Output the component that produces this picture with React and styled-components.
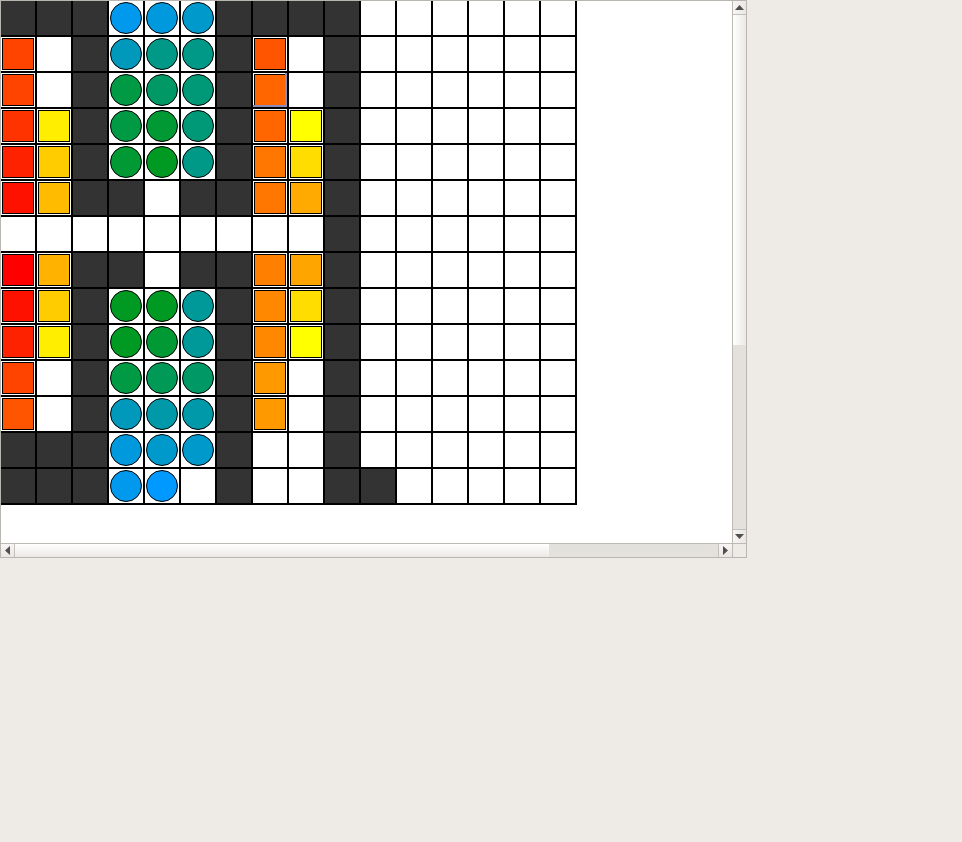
import React from "react";
import styled, { createGlobalStyle, css } from "styled-components";

const Global = createGlobalStyle`
  html, body { margin: 0; padding: 0; background: #eeebe7; }
  body { font-family: "Liberation Sans", Arial, sans-serif; }
`;

const Frame = styled.div`
  width: 747px;
  height: 558px;
  box-sizing: border-box;
  border: 1px solid #b9b5b0;
  display: grid;
  grid-template-columns: 731px 14px;
  grid-template-rows: 542px 14px;
  background: #ffffff;
`;

const Viewport = styled.div`
  background: #ffffff;
  overflow: hidden;
`;

const Board = styled.div`
  display: grid;
  grid-template-columns: repeat(16, 36px);
  grid-auto-rows: 36px;
  width: 576px;
`;

const Cell = styled.div`
  box-sizing: border-box;
  border-right: 2px solid #000;
  border-bottom: 2px solid #000;
  background: ${(p) => (p.$dark ? "#333333" : "#ffffff")};
  display: flex;
  align-items: center;
  justify-content: center;
  position: relative;
  ${(p) =>
    p.$focus &&
    css`
      &::after {
        content: "";
        position: absolute;
        inset: 0;
        box-shadow: inset -2px -2px 0 #8c8cb8;
        pointer-events: none;
      }
    `}
`;

const Square = styled.div`
  box-sizing: border-box;
  width: 32px;
  height: 32px;
  border: 1px solid #000;
  background: ${(p) => p.$c};
`;

const Circle = styled.div`
  box-sizing: border-box;
  width: 32px;
  height: 32px;
  border-radius: 50%;
  border: 1px solid #000;
  background: ${(p) => p.$c};
`;

const VScroll = styled.div`
  box-sizing: border-box;
  border-left: 1px solid #bdb9b4;
  display: flex;
  flex-direction: column;
  background: #e3e1dc;
`;

const HScroll = styled.div`
  box-sizing: border-box;
  border-top: 1px solid #bdb9b4;
  display: flex;
  flex-direction: row;
  background: #e3e1dc;
`;

const Corner = styled.div`
  box-sizing: border-box;
  border-left: 1px solid #bdb9b4;
  border-top: 1px solid #bdb9b4;
  background: #eeebe7;
`;

const Btn = styled.div`
  box-sizing: border-box;
  flex: 0 0 ${(p) => p.$size}px;
  display: flex;
  align-items: center;
  justify-content: center;
  background: ${(p) =>
    p.$vertical
      ? "linear-gradient(to right, #f7f6f4, #e9e7e3)"
      : "linear-gradient(to bottom, #f7f6f4, #e9e7e3)"};
  ${(p) => p.$edge === "bottom" && "border-bottom: 1px solid #c4c1bc;"}
  ${(p) => p.$edge === "top" && "border-top: 1px solid #c4c1bc;"}
  ${(p) => p.$edge === "right" && "border-right: 1px solid #c4c1bc;"}
  ${(p) => p.$edge === "left" && "border-left: 1px solid #c4c1bc;"}
`;

const Thumb = styled.div`
  box-sizing: border-box;
  flex: 0 0 ${(p) => p.$size}px;
  background: ${(p) =>
    p.$vertical
      ? "linear-gradient(to right, #ffffff, #ebe9e5)"
      : "linear-gradient(to bottom, #ffffff, #ebe9e5)"};
`;

const Trough = styled.div`
  flex: 1 1 auto;
  background: #e3e1dc;
`;

const Arrow = ({ dir }) => {
  const pts = {
    up: "0,5 4.5,0 9,5",
    down: "0,0 4.5,5 9,0",
    left: "5,0 0,4.5 5,9",
    right: "0,0 5,4.5 0,9",
  }[dir];
  const vert = dir === "up" || dir === "down";
  return (
    <svg width={vert ? 9 : 5} height={vert ? 5 : 9} viewBox={vert ? "0 0 9 5" : "0 0 5 9"}>
      <polygon points={pts} fill="#4f4f4d" />
    </svg>
  );
};

// Board data
const D = { t: "D" };
const W = { t: "W" };
const S = (c, focus) => ({ t: "S", c, focus });
const C = (c) => ({ t: "C", c });
const wr = (n) => Array(n).fill(W);

const rows = [
  [D, D, D, C("#0099ee"), C("#0099dd"), C("#0099cc"), D, D, D, D, ...wr(6)],
  [S("#ff4400"), W, D, C("#0099bb"), C("#009988"), C("#009988"), D, S("#ff5500"), W, D, ...wr(6)],
  [S("#ff4400"), W, D, C("#009944"), C("#009966"), C("#009977"), D, S("#ff6600", true), W, D, ...wr(6)],
  [S("#ff3300"), S("#ffee00"), D, C("#009944"), C("#009933"), C("#009977"), D, S("#ff6600"), S("#ffff00"), D, ...wr(6)],
  [S("#ff2200"), S("#ffcc00"), D, C("#009933"), C("#009922"), C("#009988"), D, S("#ff7700"), S("#ffdd00"), D, ...wr(6)],
  [S("#ff1100"), S("#ffbb00"), D, D, W, D, D, S("#ff7700"), S("#ffaa00"), D, ...wr(6)],
  [...wr(9), D, ...wr(6)],
  [S("#ff0000"), S("#ffb300"), D, D, W, D, D, S("#ff8000"), S("#ffa500"), D, ...wr(6)],
  [S("#ff1100"), S("#ffcc00"), D, C("#009922"), C("#009922"), C("#009999"), D, S("#ff8800"), S("#ffdd00"), D, ...wr(6)],
  [S("#ff2200"), S("#ffee00"), D, C("#009922"), C("#009933"), C("#009999"), D, S("#ff8800"), S("#ffff00"), D, ...wr(6)],
  [S("#ff4400"), W, D, C("#009944"), C("#009955"), C("#009966"), D, S("#ff9900"), W, D, ...wr(6)],
  [S("#ff5500"), W, D, C("#0099bb"), C("#0099aa"), C("#0099aa"), D, S("#ff9900"), W, D, ...wr(6)],
  [D, D, D, C("#0099dd"), C("#0099cc"), C("#0099cc"), D, W, W, D, ...wr(6)],
  [D, D, D, C("#0099ee"), C("#0099ff"), W, D, W, W, D, D, ...wr(5)],
];

export default function App() {
  return (
    <>
      <Global />
      <Frame>
        <Viewport>
          <Board>
            {rows.map((row, r) =>
              row.map((cell, c) => (
                <Cell key={`${r}-${c}`} $dark={cell.t === "D"} $focus={cell.focus}>
                  {cell.t === "S" && <Square $c={cell.c} />}
                  {cell.t === "C" && <Circle $c={cell.c} />}
                </Cell>
              ))
            )}
          </Board>
        </Viewport>
        <VScroll>
          <Btn $size={14} $vertical $edge="bottom">
            <Arrow dir="up" />
          </Btn>
          <Thumb $size={330} $vertical />
          <Trough />
          <Btn $size={14} $vertical $edge="top">
            <Arrow dir="down" />
          </Btn>
        </VScroll>
        <HScroll>
          <Btn $size={14} $edge="right">
            <Arrow dir="left" />
          </Btn>
          <Thumb $size={534} />
          <Trough />
          <Btn $size={14} $edge="left">
            <Arrow dir="right" />
          </Btn>
        </HScroll>
        <Corner />
      </Frame>
    </>
  );
}
